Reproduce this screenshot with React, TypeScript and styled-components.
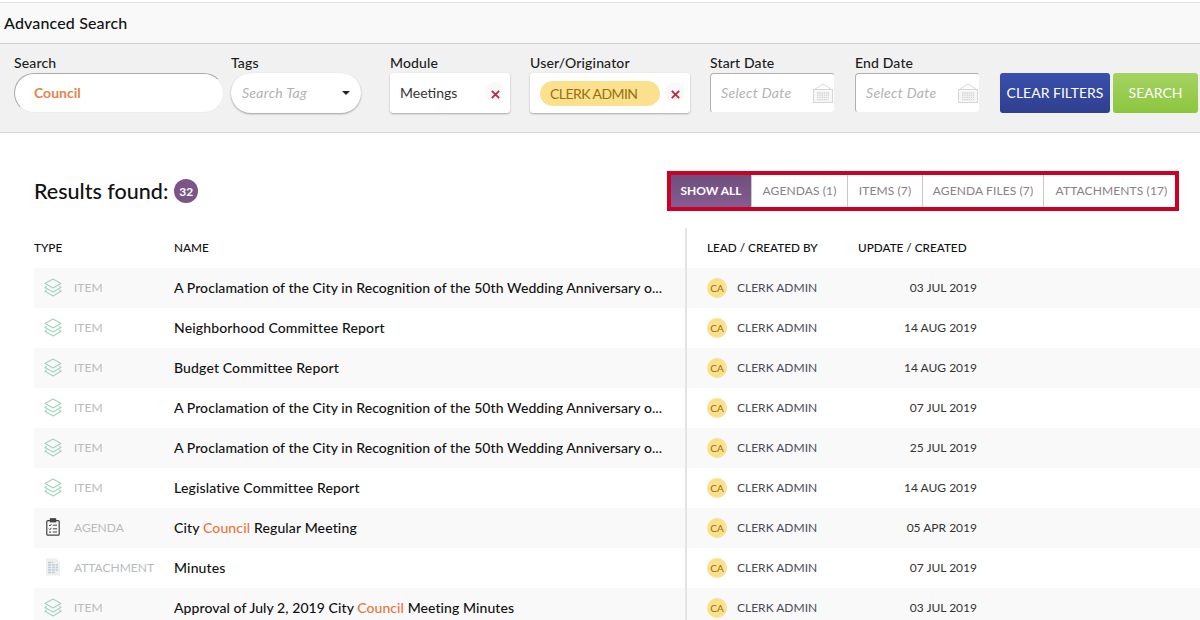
import React from 'react'
import styled, { createGlobalStyle } from 'styled-components'

const GlobalStyle = createGlobalStyle`
	html, body {
		margin: 0;
		padding: 0;
		background: #fff;
		font-family: Lato, "Open Sans", sans-serif;
		color: #1c1c1c;
	}
`

const Page = styled.div`
	width: 1200px;
	height: 620px;
	overflow: hidden;
	padding-top: 2px;
	box-sizing: border-box;
`

const TitleBar = styled.div`
	height: 40px;
	box-sizing: content-box;
	display: flex;
	align-items: center;
	padding-left: 4px;
	background: #f9f9f9;
	border-top: 1px solid #e3e3e3;
	border-bottom: 1px solid #cfcfcf;
	font-size: 16px;
	font-weight: 500;
	letter-spacing: 0.15px;
	color: #111;
`

const TitleText = styled.span`
	margin-bottom: 2px;
`

const FilterBar = styled.div`
	height: 89px;
	box-sizing: border-box;
	display: flex;
	padding: 11px 0 0 14px;
	background: #f1f1f1;
	border-bottom: 1px solid #d8d8d8;
`

const Field = styled.div<{ $width: number; $gap: number }>`
	width: ${(p) => p.$width}px;
	margin-right: ${(p) => p.$gap}px;
	flex: none;
`

const Label = styled.div`
	height: 18px;
	line-height: 16px;
	font-size: 14px;
	font-weight: 500;
	letter-spacing: 0.15px;
	color: #1c1c1c;
`

const SearchInput = styled.div`
	height: 40px;
	box-sizing: border-box;
	display: flex;
	align-items: center;
	padding: 0 0 2px 19px;
	background: #fff;
	border: 1px solid #ececec;
	border-top-color: #aaa;
	border-left-color: #aaa;
	border-radius: 20px;
	font-size: 14px;
	font-weight: 700;
	color: #e8824e;
`

const TagSelect = styled.div`
	height: 40px;
	box-sizing: border-box;
	display: flex;
	align-items: center;
	justify-content: space-between;
	padding: 0 11px 2px 11px;
	background: #fff;
	border-radius: 20px;
	box-shadow: 0 1px 2px rgba(0, 0, 0, 0.35);
	font-size: 14px;
	font-style: italic;
	letter-spacing: 0.3px;
	color: #b2b2b2;
`

const Caret = styled.span`
	width: 0;
	height: 0;
	margin-top: 2px;
	border-left: 4px solid transparent;
	border-right: 4px solid transparent;
	border-top: 4px solid #222;
`

const ChipBox = styled.div`
	height: 40px;
	box-sizing: border-box;
	display: flex;
	align-items: center;
	justify-content: space-between;
	padding: 0 5px 2px 10px;
	background: #fff;
	border-radius: 3px;
	box-shadow: 0 1px 2px rgba(0, 0, 0, 0.3);
	font-size: 14px;
	color: #333;
`

const Chip = styled.span`
	width: 120px;
	height: 25px;
	margin-top: 2px;
	display: flex;
	align-items: center;
	padding-left: 10px;
	box-sizing: border-box;
	background: #fbe08e;
	border-radius: 13px;
	font-size: 14px;
	letter-spacing: -0.55px;
	color: #96700f;
`

const RemoveButton = styled.span`
	width: 20px;
	height: 20px;
	display: flex;
	align-items: center;
	justify-content: center;
	padding-top: 4px;
	box-sizing: border-box;
	border-radius: 50%;
	background: #faf8f8;
`

const DateInput = styled.div`
	height: 40px;
	box-sizing: border-box;
	display: flex;
	align-items: center;
	justify-content: space-between;
	padding: 0 1px 0 10px;
	background: #fff;
	border: 1px solid #f1f1f1;
	border-top-color: #b0b0b0;
	border-left-color: #b0b0b0;
	border-radius: 4px;
	font-size: 14px;
	font-style: italic;
	letter-spacing: 0.35px;
	color: #b2b2b2;
`

const DateText = styled.span`
	margin-bottom: 2px;
`

const ActionButton = styled.button<{ $top: string; $bottom: string; $width: number }>`
	width: ${(p) => p.$width}px;
	height: 40px;
	margin: 18px 3px 0 0;
	padding: 0 0 2px;
	flex: none;
	border: none;
	border-radius: 3px;
	background: linear-gradient(${(p) => p.$top}, ${(p) => p.$bottom});
	font-family: inherit;
	font-size: 14px;
	color: #fff;
`

const ResultsHead = styled.div`
	height: 95px;
	box-sizing: border-box;
	display: flex;
	align-items: flex-start;
	justify-content: space-between;
	padding: 38px 21px 0 34px;
`

const ResultsTitle = styled.div`
	height: 40px;
	display: flex;
	align-items: center;
	gap: 6px;
	font-size: 21.5px;
	font-weight: 500;
	color: #111;
`

const CountBadge = styled.span`
	width: 24px;
	height: 24px;
	display: flex;
	align-items: center;
	justify-content: center;
	border-radius: 50%;
	background: #7b5488;
	font-size: 12px;
	font-weight: 700;
	color: #fff;
`

const Tabs = styled.div`
	height: 40px;
	box-sizing: border-box;
	display: flex;
	border: 4px solid #cc0025;
	background: #fff;
`

const Tab = styled.div<{ $active?: boolean; $width: number; $shift?: number }>`
	width: ${(p) => p.$width}px;
	display: flex;
	align-items: center;
	justify-content: center;
	box-sizing: border-box;
	padding-left: ${(p) => p.$shift ?? 0}px;
	padding-bottom: 2px;
	border-right: 1px solid #c9c9c9;
	font-size: 12px;
	font-weight: ${(p) => (p.$active ? 700 : 400)};
	letter-spacing: ${(p) => (p.$active ? '0' : '0.12px')};
	color: ${(p) => (p.$active ? '#fff' : '#85828a')};
	background: ${(p) => (p.$active ? 'linear-gradient(#6d4f7c, #855c91)' : '#fff')};
	&:last-child {
		border-right: none;
	}
`

const Row = styled.div<{ $striped?: boolean }>`
	height: 40px;
	margin-left: 34px;
	display: grid;
	grid-template-columns: 140px 511px 173px 119px 1fr;
	align-items: center;
	background: ${(p) => (p.$striped ? '#f9f9f9' : '#fff')};
`

const HeadCell = styled.div`
	padding-bottom: 2px;
	font-size: 11.75px;
	font-weight: 500;
	white-space: nowrap;
	color: #111;
`

const LeadHead = styled(HeadCell)`
	height: 100%;
	box-sizing: border-box;
	display: flex;
	align-items: center;
	padding-left: 20px;
	border-left: 2px solid #e4e4e4;
`

const TypeCell = styled.div`
	display: flex;
	align-items: center;
	padding: 0 0 2px 10px;
	font-size: 12px;
	color: #b9bcbd;
`

const TypeIcon = styled.span`
	width: 18px;
	height: 20px;
	margin-right: 12px;
	display: flex;
	align-items: center;
	justify-content: center;
`

const NameCell = styled.div<{ $tight?: boolean }>`
	padding-bottom: 2px;
	font-size: 14px;
	font-weight: 500;
	letter-spacing: ${(p) => (p.$tight ? '0.075px' : '0.14px')};
	color: #111;
	white-space: nowrap;
`

const Highlight = styled.span`
	color: #e8763a;
`

const LeadCell = styled.div`
	height: 100%;
	box-sizing: border-box;
	display: flex;
	align-items: center;
	gap: 10px;
	padding: 0 0 2px 20px;
	border-left: 2px solid #e4e4e4;
	font-size: 12px;
	color: #4a4a55;
`

const Avatar = styled.span`
	width: 20px;
	height: 20px;
	margin-top: 2px;
	display: flex;
	align-items: center;
	justify-content: center;
	border-radius: 50%;
	background: #fbe08e;
	font-size: 10px;
	color: #96700f;
`

const DateCell = styled.div`
	padding-bottom: 2px;
	text-align: right;
	font-size: 12px;
	color: #333;
`

const CrossIcon = () => (
	<svg width="9" height="9" viewBox="0 0 9 9">
		<path d="M0.8 0.8 L8.2 8.2 M8.2 0.8 L0.8 8.2" stroke="#b92a40" strokeWidth="1.8" fill="none" />
	</svg>
)

const CalendarIcon = () => (
	<svg width="20" height="20" viewBox="0 0 20 20" fill="none">
		<path d="M1.5 6.5 L10 1 L18.5 6.5" stroke="#dadada" strokeWidth="1" />
		<rect x="0.5" y="6.5" width="19" height="13" fill="#f7f7f7" stroke="#d6d6d6" />
		<path d="M4 10 H16 M4 12.2 H16 M4 14.4 H16 M4 16.6 H16" stroke="#d2d2d2" strokeWidth="1.3" strokeDasharray="1.5 0.7" />
	</svg>
)

const ItemIcon = () => (
	<svg width="18" height="19" viewBox="0 0 18 19" fill="none" stroke="#a3d4bf" strokeWidth="1.2" strokeLinejoin="round">
		<path d="M9 1 L17 5.5 L9 10 L1 5.5 Z" />
		<path d="M2.6 8.2 L1 9.4 L9 14 L17 9.4 L15.4 8.2" />
		<path d="M2.6 12 L1 13.2 L9 18 L17 13.2 L15.4 12" />
	</svg>
)

const AgendaIcon = () => (
	<svg width="14" height="18" viewBox="0 0 14 18" fill="none" stroke="#444" strokeWidth="1.2">
		<rect x="0.8" y="2.6" width="12.4" height="14.6" rx="1" />
		<rect x="4.4" y="0.8" width="5.2" height="3" fill="#444" />
		<path d="M3 7 L4 8 L5.4 6.2 M3 10.6 L4 11.6 L5.4 9.8 M3 14 L5.2 14 M6.8 7.2 H11 M6.8 10.8 H11 M6.8 14 H11" strokeWidth="1" />
	</svg>
)

const AttachmentIcon = () => (
	<svg width="14" height="18" viewBox="0 0 14 18">
		<path d="M0 0.5 H10 L14 4.5 V17.5 H0 Z" fill="#eef0ec" />
		<path d="M2 4.5 H7 M2 7 H12 M2 9.5 H12 M2 12 H12 M2 14.5 H9" stroke="#c0cadf" strokeWidth="1.5" strokeDasharray="3 0.8" />
	</svg>
)

type RowData = {
	type: 'ITEM' | 'AGENDA' | 'ATTACHMENT'
	name: React.ReactNode
	date: string
	tight?: boolean
}

const proclamation = 'A Proclamation of the City in Recognition of the 50th Wedding Anniversary o...'

const rows: RowData[] = [
	{ type: 'ITEM', name: proclamation, date: '03 JUL 2019', tight: true },
	{ type: 'ITEM', name: 'Neighborhood Committee Report', date: '14 AUG 2019' },
	{ type: 'ITEM', name: 'Budget Committee Report', date: '14 AUG 2019' },
	{ type: 'ITEM', name: proclamation, date: '07 JUL 2019', tight: true },
	{ type: 'ITEM', name: proclamation, date: '25 JUL 2019', tight: true },
	{ type: 'ITEM', name: 'Legislative Committee Report', date: '14 AUG 2019' },
	{ type: 'AGENDA', name: <>City <Highlight>Council</Highlight> Regular Meeting</>, date: '05 APR 2019' },
	{ type: 'ATTACHMENT', name: 'Minutes', date: '07 JUL 2019' },
	{ type: 'ITEM', name: <>Approval of July 2, 2019 City <Highlight>Council</Highlight> Meeting Minutes</>, date: '03 JUL 2019', tight: true },
]

const icons = {
	ITEM: <ItemIcon />,
	AGENDA: <AgendaIcon />,
	ATTACHMENT: <AttachmentIcon />,
}

export default function App() {
	return (
		<Page>
			<GlobalStyle />
			<TitleBar><TitleText>Advanced Search</TitleText></TitleBar>
			<FilterBar>
				<Field $width={210} $gap={7}>
					<Label>Search</Label>
					<SearchInput>Council</SearchInput>
				</Field>
				<Field $width={130} $gap={29}>
					<Label>Tags</Label>
					<TagSelect>Search Tag<Caret /></TagSelect>
				</Field>
				<Field $width={120} $gap={20}>
					<Label>Module</Label>
					<ChipBox>Meetings<RemoveButton><CrossIcon /></RemoveButton></ChipBox>
				</Field>
				<Field $width={160} $gap={20}>
					<Label>User/Originator</Label>
					<ChipBox><Chip>CLERK ADMIN</Chip><RemoveButton><CrossIcon /></RemoveButton></ChipBox>
				</Field>
				<Field $width={125} $gap={20}>
					<Label>Start Date</Label>
					<DateInput><DateText>Select Date</DateText><CalendarIcon /></DateInput>
				</Field>
				<Field $width={125} $gap={20}>
					<Label>End Date</Label>
					<DateInput><DateText>Select Date</DateText><CalendarIcon /></DateInput>
				</Field>
				<ActionButton $top="#3a50ad" $bottom="#2f3f8f" $width={110}>CLEAR FILTERS</ActionButton>
				<ActionButton $top="#a5d363" $bottom="#8cc63e" $width={85}>SEARCH</ActionButton>
			</FilterBar>
			<ResultsHead>
				<ResultsTitle>Results found: <CountBadge>32</CountBadge></ResultsTitle>
				<Tabs>
					<Tab $active $width={81}>SHOW ALL</Tab>
					<Tab $width={96}>AGENDAS (1)</Tab>
					<Tab $width={75}>ITEMS (7)</Tab>
					<Tab $width={121}>AGENDA FILES (7)</Tab>
					<Tab $width={131} $shift={4}>ATTACHMENTS (17)</Tab>
				</Tabs>
			</ResultsHead>
			<Row>
				<HeadCell>TYPE</HeadCell>
				<HeadCell>NAME</HeadCell>
				<LeadHead>LEAD / CREATED BY</LeadHead>
				<HeadCell>UPDATE / CREATED</HeadCell>
			</Row>
			{rows.map((row, index) => (
				<Row key={index} $striped={index % 2 === 0}>
					<TypeCell><TypeIcon>{icons[row.type]}</TypeIcon>{row.type}</TypeCell>
					<NameCell $tight={row.tight}>{row.name}</NameCell>
					<LeadCell><Avatar>CA</Avatar>CLERK ADMIN</LeadCell>
					<DateCell>{row.date}</DateCell>
				</Row>
			))}
		</Page>
	)
}
